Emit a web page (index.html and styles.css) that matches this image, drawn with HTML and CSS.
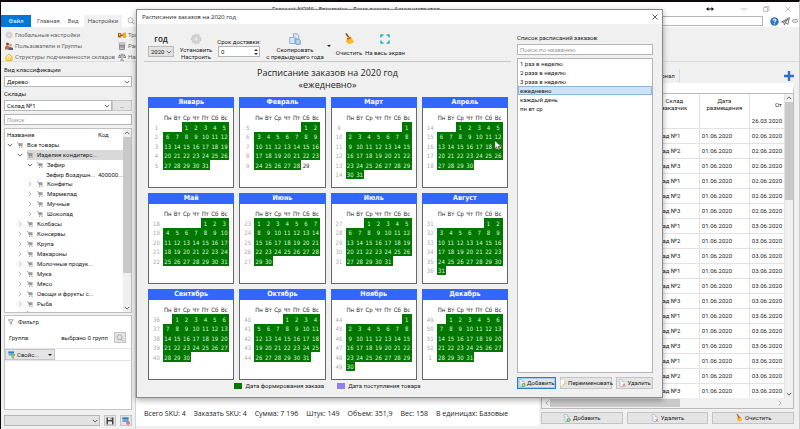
FILE: index.html
```html
<!DOCTYPE html>
<html lang="ru">
<head>
<meta charset="utf-8">
<title>Forecast NOW! - Enterprise</title>
<link rel="stylesheet" href="styles.css">
</head>
<body>
<svg class="sprite" aria-hidden="true">
  <symbol id="cart" viewBox="0 0 12 12"><path d="M0 1h2l2 7h7M3 3h8M3.500 5h7M4 6.500h6.500M5 3v5M7.500 3v5M10 3v5" fill="none" stroke="#777"/><circle cx="5" cy="10.500" r="1" fill="#666"/><circle cx="10" cy="10.500" r="1" fill="#666"/></symbol>
  <symbol id="right" viewBox="0 0 8 8"><path d="M2.500 1l3 3-3 3" fill="none" stroke="#999"/></symbol>
  <symbol id="down" viewBox="0 0 8 8"><path d="M1 2.500l3 3 3-3" fill="none" stroke="#555" stroke-width="1.200"/></symbol>
  <symbol id="up" viewBox="0 0 8 8"><path d="M1 5.500l3-3 3 3" fill="none" stroke="#555" stroke-width="1.200"/></symbol>
  <symbol id="gear" viewBox="0 0 16 16"><circle cx="8" cy="8" r="5.500" fill="#ccc" stroke="#ccc" stroke-width="3" stroke-dasharray="2.500 1.400"/><circle cx="8" cy="8" r="5.500" fill="#cfcfcf"/><circle cx="8" cy="8" r="2.500" fill="#e4e4e4"/></symbol>
  <symbol id="brush" viewBox="0 0 16 16"><path d="M3 1l2-1 4 6-2 1z" fill="#8a5a1c"/><path d="M5 7l5-2 5 7-7 3-4-3z" fill="#f5b82e"/><path d="M5 7l5-2 1 2-5 2z" fill="#d2691e"/></symbol>
  <symbol id="docadd" viewBox="0 0 16 16"><path d="M2 1h6v4h4v10H4V5H2z" fill="#f4f8fc" stroke="#7f9db9"/><circle cx="11" cy="12" r="4" fill="#4caf50"/><path d="M11 9.500v5M8.500 12h5" stroke="#fff"/></symbol>
  <symbol id="docdel" viewBox="0 0 16 16"><path d="M2 1h6v4h4v10H4V5H2z" fill="#f8f8fc" stroke="#9aa5b5"/><path d="M9 10l5 5M14 10l-5 5" stroke="#d66" stroke-width="1.500"/></symbol>
  <symbol id="filter" viewBox="0 0 16 16"><path d="M1 2h13l-5 6v6l-3-2V8z" fill="none" stroke="#555" stroke-width="1.500"/></symbol>
  <symbol id="search" viewBox="0 0 16 16"><circle cx="7" cy="6.500" r="5" fill="none" stroke="#999" stroke-width="1.500"/><path d="M11 10.500l4 4" stroke="#999" stroke-width="2"/></symbol>
  <symbol id="props" viewBox="0 0 16 16"><path d="M1 1h11v8H1z" fill="#69b3ea"/><path d="M1 1h11v3H1z" fill="#2e7fc2"/><path d="M5 7h9l-3 4v4l-3-2v-2z" fill="#a6d26a" stroke="#5a8d2e"/></symbol>
</svg>

<div class="app">
  <header class="titlebar">
    <span class="titlebar-text">Forecast NOW! - Enterprise - Демо режим - Администратор</span>
    <span class="window-controls">
      <svg class="i8" viewBox="0 0 8 8"><path d="M1 4h6" stroke="#111"/><path d="M0 4l2.500-2v4zM8 4L5.500 2v4z" fill="#111"/></svg>
      <svg class="i8 gap-wide" viewBox="0 0 8 8"><path d="M1 4h6" stroke="#999" stroke-width=".6"/></svg>
      <svg class="i8" viewBox="0 0 8 8"><path d="M1.500 2.500h4v4h-4zM3 2.500V1.500h4v4H5.500" fill="none" stroke="#999" stroke-width=".6"/></svg>
      <svg class="i8" viewBox="0 0 8 8"><path d="M1.500 1.500l5 5M6.500 1.500l-5 5" stroke="#999" stroke-width=".6"/></svg>
    </span>
  </header>

  <nav class="tabs">
    <a class="tab tab-file" href="#">Файл</a>
    <a class="tab" href="#">Главная</a>
    <a class="tab" href="#">Вид</a>
    <a class="tab tab-active" href="#">Настройки</a>
    <svg class="i8 tabs-search"><use href="#search"/></svg>
    <input class="tabs-input" type="text" aria-label="Поиск команд">
    <svg class="i9" viewBox="0 0 16 16"><circle cx="8" cy="8" r="7.500" fill="#2c74c4"/><path d="M5.500 6c0-3.500 5-3 5-.5 0 2-2.500 2-2.500 4M8 11v2" fill="none" stroke="#fff" stroke-width="2"/></svg>
    <svg class="i9" viewBox="0 0 16 16"><path d="M1 9L15 1l-3 12-4-3-2 4-1-5zM5 9l7-5-4 6" fill="#fff" stroke="#444" stroke-width="1.300"/></svg>
    <svg class="i6" viewBox="0 0 10 10"><path d="M1 5a2 2 0 014-1M5 6a2 2 0 004-2 2 2 0 00-4 0M1 5a2 2 0 003 2h2" fill="none" stroke="#555"/></svg>
  </nav>

  <section class="ribbon">
    <div class="ribbon-group">
      <a class="ribbon-item" href="#"><svg class="i8"><use href="#gear"/></svg>Глобальные настройки</a>
      <a class="ribbon-item" href="#"><svg class="i8" viewBox="0 0 16 16"><circle cx="5" cy="4" r="3" fill="#7a4a2b"/><path d="M0 15V9l5-2 4 2v6z" fill="#c56a3c"/><circle cx="11" cy="6" r="3" fill="#d9a27b"/><path d="M7 16v-4l4-2 5 2v4z" fill="#4f5f80"/></svg>Пользователи и Группы</a>
      <a class="ribbon-item" href="#"><svg class="i8" viewBox="0 0 16 16"><path d="M2 15V7l6-5 6 5v8z" fill="#fbe6a4" stroke="#dca624" stroke-width="1.500"/><path d="M6 15v-5h5v5" fill="none" stroke="#dca624"/></svg>Структуры подчиненности складов</a>
    </div>
    <div class="ribbon-group">
      <a class="ribbon-item" href="#"><svg class="i8" viewBox="0 0 16 16"><path d="M0 4h6v9H0z" fill="#b2571b"/><path d="M6 7h4v3H6z" fill="#444"/><path d="M9 4l7-1v11l-7-1z" fill="#f0a91c"/><path d="M2 6h3v3H2z" fill="#ffd257"/></svg>Транспорт</a>
      <a class="ribbon-item" href="#"><svg class="i8" viewBox="0 0 16 16"><path d="M1 2h14M3 4v11h10V4M3 7h10M3 10h10M6 4v11M10 4v11" fill="none" stroke="#666" stroke-width="1.300"/></svg>Расписание</a>
      <a class="ribbon-item" href="#"><svg class="i8" viewBox="0 0 16 16"><path d="M8 1v13M4 14.500h8M2 4h12M3 4L1 9h5L3 4M13 4l-2 5h5l-3-5" fill="none" stroke="#555" stroke-width="1.200"/></svg>Настройка</a>
    </div>
  </section>

  <div class="workspace">
    <aside class="sidebar">
      <label class="field-label" for="cls">Вид классификации</label>
      <div class="select-box"><select id="cls"><option>Дерево</option></select><svg class="i6"><use href="#down"/></svg></div>
      <label class="field-label" for="wh">Склады</label>
      <div class="field-row">
        <div class="select-box"><select id="wh"><option>Склад №1</option></select><svg class="i6"><use href="#down"/></svg></div>
        <button class="more" type="button">...</button>
      </div>
      <input class="side-search" type="text" placeholder="Поиск" aria-label="Поиск">

      <div class="tree">
        <div class="tree-main">
          <div class="tree-head"><span>Название</span><span class="tree-code">Код</span></div>
          <ul class="tree-list" id="tree"></ul>
        </div>
        <div class="scrollbar"><svg class="i6"><use href="#up"/></svg><span class="thumb thumb-tree"></span><svg class="i6 push"><use href="#down"/></svg></div>
      </div>

      <div class="filter">
        <div class="filter-title"><svg class="i6"><use href="#filter"/></svg>Фильтр</div>
        <div class="filter-group"><span>Группа:</span><span class="filter-value">выбрано 0 групп</span><button class="icon-button" type="button" aria-label="Выбрать группы"><svg class="i8"><use href="#search"/></svg></button></div>
        <div class="filter-props"><button class="props" type="button"><svg class="i8"><use href="#props"/></svg>Свойс...<span class="caret"></span></button></div>
      </div>

      <div class="side-bottom">
        <div class="select-box select-grey"><select aria-label="Сохраненный фильтр"><option></option></select><svg class="i6"><use href="#down"/></svg></div>
        <button class="icon-button" type="button" aria-label="Сохранить"><svg class="i8" viewBox="0 0 16 16"><path d="M1 1h14v14H1z" fill="#444"/><path d="M4 1h8v5H4zM4 9h8v6H4z" fill="#eee"/><path d="M9 2h2v3H9z" fill="#444"/></svg></button>
        <button class="icon-button" type="button" aria-label="Сбросить фильтр"><svg class="i8" viewBox="0 0 16 16"><path d="M1 1h12v9H1z" fill="#69a9dc"/><path d="M1 1h12v3H1z" fill="#3f78ac"/><circle cx="12" cy="12" r="3.500" fill="#e04848"/><path d="M10 12h4" stroke="#fff"/></svg></button>
      </div>
    </aside>

    <main class="center">
      <p class="totals"><span>Всего SKU: 4</span><span>Заказать SKU: 4</span><span>Сумма: 7 196</span><span>Штук: 149</span><span>Объем: 351,9</span><span>Вес: 158</span><span>В единицах: Базовые</span></p>
    </main>

    <section class="orders">
      <div class="orders-tabs"><span class="orders-tab">Журнал</span>
        <svg class="i10 plus" viewBox="0 0 10 10"><path d="M5 0v10M0 5h10" stroke="#2f6fc9" stroke-width="2.400"/></svg>
      </div>
      <div class="orders-box">
        <div class="orders-scroll">
          <table class="orders-table">
            <colgroup><col><col class="col-date"><col class="col-date"><col class="col-from"></colgroup>
            <thead>
              <tr class="head-top"><th></th><th>Склад<br>заказчик</th><th>Дата<br>размещения</th><th class="num">От</th></tr>
              <tr class="head-sub"><td></td><td></td><td></td><td>26.03.2020</td></tr>
            </thead>
            <tbody id="orders"></tbody>
          </table>
          <div class="scrollbar"><svg class="i6"><use href="#up"/></svg><span class="thumb thumb-orders"></span><svg class="i6 push"><use href="#down"/></svg></div>
        </div>
        <div class="hscroll"><svg class="i6 flip"><use href="#right"/></svg><span class="hthumb"></span><svg class="i6 push-x"><use href="#right"/></svg></div>
      </div>
      <div class="orders-actions">
        <button type="button"><svg class="i8"><use href="#docadd"/></svg>Добавить</button>
        <button type="button"><svg class="i8"><use href="#docdel"/></svg>Удалить</button>
        <button type="button"><svg class="i8"><use href="#brush"/></svg>Очистить</button>
      </div>
    </section>
  </div>
</div>

<div class="dialog" role="dialog" aria-labelledby="dlg-title">
  <div class="dialog-title"><span id="dlg-title">Расписание заказов на 2020 год</span>
    <button class="close" type="button" aria-label="Закрыть"><svg class="i8" viewBox="0 0 8 8"><path d="M1.500 1.500l5 5M6.500 1.500l-5 5" stroke="#333" stroke-width=".8"/></svg></button>
  </div>
  <div class="dialog-body">
    <section class="schedule">
      <div class="toolbar">
        <div class="tool tool-year"><label for="year">год</label><div class="select-box select-grey"><select id="year"><option>2020</option></select><svg class="i6"><use href="#down"/></svg></div></div>
        <button class="tool tool-set" type="button"><svg class="i12"><use href="#gear"/></svg><span>Установить<br>Настроить</span></button>
        <div class="tool tool-term"><label for="term">Срок доставки:</label>
          <div class="spin"><input id="term" type="text" value="0"><span class="spin-arrows"><i class="tri-up"></i><i class="tri-down"></i></span></div></div>
        <button class="tool tool-copy" type="button"><svg class="i12" viewBox="0 0 16 16"><path d="M1 6h5l2 2v6H1zM6 1h5l2 2v6H9V7L7 5H6z" fill="#d8e8f6" stroke="#6f9cc4"/><path d="M9 8h4l2 2v5H9z" fill="#bcd8ee" stroke="#5b8ab5"/></svg><span>Скопировать<br>с предыдущего года</span></button>
        <span class="caret copy-caret"></span>
        <button class="tool tool-clear" type="button"><svg class="i12"><use href="#brush"/></svg><span>Очистить</span></button>
        <button class="tool tool-full" type="button"><svg class="i12" viewBox="0 0 12 12"><path d="M2 4.500V2h2.500M7.500 2H10v2.500M10 7.500V10H7.500M4.500 10H2V7.500" fill="none" stroke="#22b2c2" stroke-width="1.600"/></svg><span>На весь экран</span></button>
      </div>
      <h1 class="heading">Расписание заказов на 2020 год<br>«ежедневно»</h1>
      <div class="months" id="months"></div>
      <div class="legend"><span><i class="swatch swatch-order"></i>Дата формирования заказа</span><span><i class="swatch swatch-arrival"></i>Дата поступления товара</span></div>
    </section>
    <section class="lists">
      <label class="list-label" for="find">Список расписаний заказов:</label>
      <input class="list-search" id="find" type="text" placeholder="Поиск по названию">
      <ul class="listbox" role="listbox" aria-label="Расписания">
        <li role="option">1 раз в неделю</li>
        <li role="option">2 раза в неделю</li>
        <li role="option">3 раза в неделю</li>
        <li role="option" class="selected" aria-selected="true">ежедневно</li>
        <li role="option">каждый день</li>
        <li role="option">пн вт ср</li>
      </ul>
      <div class="list-actions">
        <button class="primary" type="button"><svg class="i8"><use href="#docadd"/></svg>Добавить</button>
        <button class="rename" type="button"><svg class="i8" viewBox="0 0 16 16"><path d="M3 1h8v13H3z" fill="#fff" stroke="#ccc"/><path d="M6 13l7-8 2 2-7 7-3 1z" fill="#f1c56d"/></svg>Переименовать</button>
        <button type="button"><svg class="i8"><use href="#docdel"/></svg>Удалить</button>
      </div>
    </section>
  </div>
</div>
<svg class="pointer" viewBox="0 0 8 12"><path d="M.5.500v9l2-2 1.500 3.500 1.500-.7L4 7h3.300z" fill="#fff" stroke="#222" stroke-width=".6"/></svg>
<script src="app.js"></script>
</body>
</html>
```
FILE: styles.css
```css
* { box-sizing: border-box; }
body { margin: 0; background: #f0f0f0; color: #222; font: 6px/8px Roboto, "Noto Sans", sans-serif; }
button, input, select { font: inherit; color: inherit; margin: 0; padding: 0; border-radius: 0; min-width: 0; }
button { background: #e4e4e4; border: 1px solid #c4c4c4; display: flex; align-items: center; justify-content: center; gap: 2px; white-space: nowrap; }
input { background: #fff; border: 1px solid #b4b4b4; padding: 0 2px; }
input::placeholder { color: #999; opacity: 1; }
a { color: inherit; text-decoration: none; }
ul { list-style: none; margin: 0; padding: 0; }
svg { flex: none; display: block; }
.sprite { position: absolute; width: 0; height: 0; }
.i6 { width: 6px; height: 6px; }
.i8 { width: 8px; height: 8px; }
.i9 { width: 9px; height: 9px; }
.i10 { width: 10px; height: 10px; }
.i12 { width: 12px; height: 12px; }

.app { display: flex; flex-direction: column; height: 100vh; overflow: hidden; border-top: 2px solid #0c0808; border-left: 1px solid #0c0808; border-right: 1px solid #ccc; }

.titlebar { flex: none; display: grid; grid-template-columns: 271px auto 1fr; align-items: center; height: 13px; background: #fff; }
.titlebar-text { grid-column: 2; font-family: "Open Sans", "Noto Sans", sans-serif; }
.window-controls { display: flex; justify-content: flex-end; gap: 14px; padding-right: 7px; }
.gap-wide { margin-left: 12px; }

.tabs { flex: none; display: flex; align-items: center; gap: 2px; height: 12px; background: #fff; padding-right: 1px; color: #555; }
.tab { line-height: 12px; padding: 0 3px; }
.tab-file { width: 30px; padding: 0; text-align: center; background: #0078d7; color: #fff; margin-right: 1px; }
.tab-active { background: #f0f0f0; padding: 0 4px; }
.tabs-input { flex: 1; height: 10px; margin-right: 5px; }
.tabs-search { margin-left: 3px; margin-right: 4px; }

.ribbon { flex: none; display: flex; gap: 5px; height: 35px; padding: 4px 4px 0; border-bottom: 1px solid #ddd; color: #666; }
.ribbon-group { width: 108px; display: flex; flex-direction: column; gap: 3px; }
.ribbon-item { display: flex; align-items: center; gap: 2px; white-space: nowrap; }

.workspace { flex: 1; min-height: 0; display: grid; grid-template-columns: 135px 1fr 260px; }

.sidebar { display: flex; flex-direction: column; padding: 4px 3px 4px 3px; border-right: 1px solid #d4d4d4; }
.field-label { margin: 0 0 2px; }
.select-box { position: relative; flex: 1 1 auto; display: flex; min-width: 0; }
.select-box select { appearance: none; width: 100%; height: 11px; line-height: 9px; background: #fff; border: 1px solid #b8b8b8; padding: 0 2px; }
.select-box svg { position: absolute; right: 2px; top: 3px; pointer-events: none; }
.select-grey select { background: #e2e2e2; }
.sidebar > .select-box { flex: none; margin-bottom: 3px; }
.field-row { display: flex; margin-bottom: 3px; }
.more { width: 20px; }
.side-search { height: 11px; flex: none; margin-bottom: 3px; }

.tree { flex: none; display: flex; height: 185px; background: #fff; border: 1px solid #c0c0c0; overflow: hidden; }
.tree-main { flex: 1; min-width: 0; overflow: hidden; }
.tree-head { display: grid; grid-template-columns: 1fr 25px; padding-left: 2px; line-height: 11px; }
.tree-list li { display: grid; grid-template-columns: 1fr 25px; height: 10px; align-items: center; }
.tree-list li.leaf { height: 9px; }
.tree-name { display: flex; align-items: center; gap: 4px; white-space: nowrap; padding-left: 2px; }
.level-1 .tree-name { padding-left: 12px; }
.level-2 .tree-name { padding-left: 22px; }
.level-3 .tree-name { padding-left: 41px; }
.tree-row-selected { background: linear-gradient(to right, transparent 22px, #d9d9d9 22px); }

.scrollbar { width: 8px; flex: none; display: flex; flex-direction: column; align-items: center; background: #f0f0f0; padding: 1px 0; }
.thumb { width: 8px; background: #c9c9c9; margin-top: 1px; }
.thumb-tree { height: 136px; }
.push { margin-top: auto; }

.filter { flex: 1; background: #fff; border: 1px solid #c4c4c4; margin: 2px 0 5px; }
.filter-title { display: flex; align-items: center; gap: 4px; padding: 2px 3px 0; }
.filter-group { display: flex; align-items: center; gap: 6px; padding: 6px 5px 5px 4px; border-bottom: 1px solid #e4e4e4; }
.filter-value { margin-left: auto; }
.icon-button { width: 12px; height: 11px; }
.filter-props { border-bottom: 1px solid #e4e4e4; }
.props { width: 50px; height: 11px; justify-content: flex-start; padding: 0 2px; gap: 1px; }
.caret { border: 2px solid transparent; border-top-color: #222; border-bottom: 0; margin-left: auto; }
.side-bottom { flex: none; display: flex; gap: 4px; }

.center { display: flex; align-items: flex-end; background: #fff; margin-bottom: 4px; }
.totals { display: flex; gap: 8px; margin: 0 0 6px 8px; font-family: "Open Sans", "Noto Sans", sans-serif; font-size: 7px; line-height: 12px; white-space: nowrap; }

.orders { display: flex; flex-direction: column; padding: 0 5px 6px 2px; min-width: 0; }
.orders-tabs { flex: none; display: flex; align-items: center; justify-content: flex-end; height: 21px; padding-top: 7px; }
.orders-tab { margin-right: auto; padding: 0 4px 0 112px; line-height: 14px; border-right: 1px solid #ddd; }
.orders-box { flex: 1; min-height: 0; display: flex; flex-direction: column; border: 1px solid #bbb; border-top: 10px solid #fff; background: #fff; }
.orders-scroll { flex: 1; min-height: 0; display: flex; overflow: hidden; border-top: 1px solid #bbb; }
.orders-table { flex: 1; height: 0; border-collapse: collapse; table-layout: fixed; background: #fff; }
.col-date { width: 50px; }
.col-from { width: 33px; }
.orders-table th, .orders-table td { padding: 0 2px; font-weight: 400; border-right: 1px solid #e2e2e2; white-space: nowrap; overflow: hidden; }
.orders-table th { line-height: 7px; }
.head-top { height: 20px; }
.head-sub { height: 14px; }
.orders-table .num { text-align: right; }
.orders-table tbody tr { height: 15px; border-top: 1px solid #e2e2e2; }
.thumb-orders { height: 98px; }
.hscroll { flex: none; display: flex; align-items: center; height: 10px; background: #f0f0f0; padding: 0 10px 0 2px; }
.hthumb { width: 130px; height: 8px; background: #c9c9c9; }
.flip { rotate: 180deg; }
.push-x { margin-left: auto; }
.orders-actions { flex: none; display: grid; grid-template-columns: repeat(3, 1fr); gap: 4px; margin-top: 3px; }
.orders-actions button { height: 12px; }

.dialog { position: absolute; left: 136px; right: 137px; top: 9px; bottom: 31px; display: flex; flex-direction: column; background: #f0f0f0; border: 1px solid #8a8a8a; box-shadow: 0 2px 6px rgba(0, 0, 0, .35); }
.dialog-title { flex: none; display: flex; align-items: center; justify-content: space-between; height: 14px; padding: 0 3px 0 5px; background: #fff; font-family: "Open Sans", "Noto Sans", sans-serif; }
.close { border: 0; background: none; }
.dialog-body { flex: 1; min-height: 0; display: grid; grid-template-columns: 1fr 136px; gap: 6px; padding: 0 9px 0 7px; }
.schedule { display: flex; flex-direction: column; min-width: 0; }
.toolbar { flex: none; display: flex; height: 38px; padding: 9px 0 0 4px; border-bottom: 1px solid #c8c8c8; }
.tool { display: flex; flex-direction: column; align-items: center; justify-content: flex-start; gap: 1px; border: 0; background: none; line-height: 7px; text-align: center; }
.tool-year { width: 26px; gap: 3px; padding-top: 1px; }
.tool-year label { font-family: "Open Sans", "Noto Sans", sans-serif; font-size: 8px; line-height: 9px; font-weight: 600; }
.tool-year .select-box { flex: none; width: 100%; }
.tool-set { width: 44px; }
.tool-term { width: 42px; padding-top: 5px; white-space: nowrap; }
.spin { position: relative; width: 100%; display: flex; }
.spin input { width: 100%; height: 11px; }
.spin-arrows { position: absolute; right: 2px; top: 3px; display: flex; flex-direction: column; gap: 2px; }
.tri-up, .tri-down { border: 2px solid transparent; }
.tri-up { border-bottom-color: #333; border-top: 0; }
.tri-down { border-top-color: #333; border-bottom: 0; }
.tool-copy { width: 70px; }
.copy-caret { margin: 12px 3px 0 -3px; height: 2px; }
.tool-clear { width: 30px; }
.tool-full { width: 42px; }
.tool-clear, .tool-full { gap: 4px; }
.heading { flex: none; margin: 5px 0 6px; text-align: center; font-family: "Open Sans", "Noto Sans", sans-serif; font-size: 9px; line-height: 12px; font-weight: 400; }
.months { flex: none; display: grid; grid-template-columns: repeat(4, 1fr); gap: 5px; padding: 0 3px 0 4px; }
.month { height: 91px; background: #fff; border: 1px solid #666; border-top: 0; font-family: "DejaVu Sans Condensed", "DejaVu Sans", sans-serif; }
.month h2 { margin: 0 -1px 4px; background: #3366ff; color: #fff; text-align: center; font-size: 7px; line-height: 11px; font-weight: 700; }
.month-table { width: 79px; margin-left: 1px; border-collapse: collapse; table-layout: fixed; text-align: center; font-size: 6px; line-height: 9px; }
.month-table th, .month-table td { padding: 0; font-weight: 400; white-space: nowrap; }
.month-table .week { width: 13px; color: #aaa; }
.month-table tr { height: 10px; }
.month-table tr:nth-child(even) { height: 9px; }
.month-table .order { background: #007800; color: #dff3df; }
.legend { display: flex; justify-content: center; gap: 13px; margin-top: 2px; }
.legend span { display: flex; align-items: center; gap: 3px; }
.swatch { width: 8px; height: 6px; background: #007800; }
.swatch-arrival { background: #8f7ff0; }

.lists { display: flex; flex-direction: column; padding: 10px 0 8px; }
.list-label { margin-bottom: 2px; }
.list-search { height: 11px; flex: none; margin-bottom: 3px; }
.listbox { flex: 1; background: #fff; border: 1px solid #b4b4b4; line-height: 9px; }
.listbox li { padding: 0 2px; }
.listbox .selected { background: #cce4fb; outline: 1px solid #8ab8e0; outline-offset: -1px; }
.list-actions { display: flex; justify-content: space-between; gap: 4px; margin-top: 4px; }
.list-actions button { height: 12px; width: 37px; gap: 1px; }
.list-actions .rename { width: 53px; }
.list-actions .primary { border-color: #2a7ac8; width: 39px; box-shadow: inset 0 0 0 1px #a9cdf0; }
.pointer { position: absolute; left: 494px; top: 140px; width: 8px; height: 11px; }
```
FILE: app.js
```js
const treeItems = [
  ["Все товары", 0, "down"],
  ["Изделия кондитерс...", 1, "down", "tree-row-selected"],
  ["Зефир", 2, "down"],
  ["Зефир Воздушн...", 3, "leaf"],
  ["Конфеты", 2], ["Мармелад", 2], ["Мучные", 2], ["Шоколад", 2],
  ["Колбасы", 1], ["Консервы", 1], ["Крупа", 1], ["Макароны", 1],
  ["Молочные продук...", 1], ["Мука", 1], ["Мясо", 1],
  ["Овощи и фрукты с...", 1], ["Рыба", 1], ["Сыры", 1]
];
document.getElementById("tree").innerHTML = treeItems.map(([name, level, kind = "right", extra = ""]) => {
  const leaf = kind === "leaf";
  const icons = leaf ? "" : `<svg class="i6"><use href="#${kind}"/></svg><svg class="i6"><use href="#cart"/></svg>`;
  return `<li class="level-${level} ${leaf ? "leaf" : ""} ${extra}"><span class="tree-name">${icons}${name}</span><span>${leaf ? "400000..." : ""}</span></li>`;
}).join("");

document.getElementById("orders").innerHTML = Array.from({ length: 18 }, (_, i) =>
  `<tr><td></td><td>Склад №${i % 3 + 1}</td><td>01.06.2020</td><td>${i < 6 ? "02" : "03"}.06.2020</td></tr>`
).join("");

const names = ["Январь", "Февраль", "Март", "Апрель", "Май", "Июнь", "Июль", "Август", "Сентябрь", "Октябрь", "Ноябрь", "Декабрь"];
const firstWeek = [1, 5, 9, 14, 18, 23, 27, 31, 36, 40, 44, 49];
const weekdays = ["Пн", "Вт", "Ср", "Чт", "Пт", "Сб", "Вс"];

function monthCard(name, m) {
  const days = new Date(2020, m + 1, 0).getDate();
  const offset = (new Date(2020, m, 1).getDay() + 6) % 7;
  let rows = "";
  for (let w = 0; w * 7 < days + offset; w++) {
    const week = m === 11 && w === 4 ? 1 : firstWeek[m] + w;
    let cells = `<td class="week">${week}</td>`;
    for (let c = 0; c < 7; c++) {
      const day = w * 7 + c - offset + 1;
      if (day < 1 || day > days) cells += "<td></td>";
      else cells += `<td class="${m === 1 && day === 29 ? "" : "order"}">${day}</td>`;
    }
    rows += `<tr>${cells}</tr>`;
  }
  const head = weekdays.map(d => `<th>${d}</th>`).join("");
  return `<article class="month"><h2>${name}</h2><table class="month-table"><thead><tr><th class="week"></th>${head}</tr></thead><tbody>${rows}</tbody></table></article>`;
}
document.getElementById("months").innerHTML = names.map(monthCard).join("");
```
